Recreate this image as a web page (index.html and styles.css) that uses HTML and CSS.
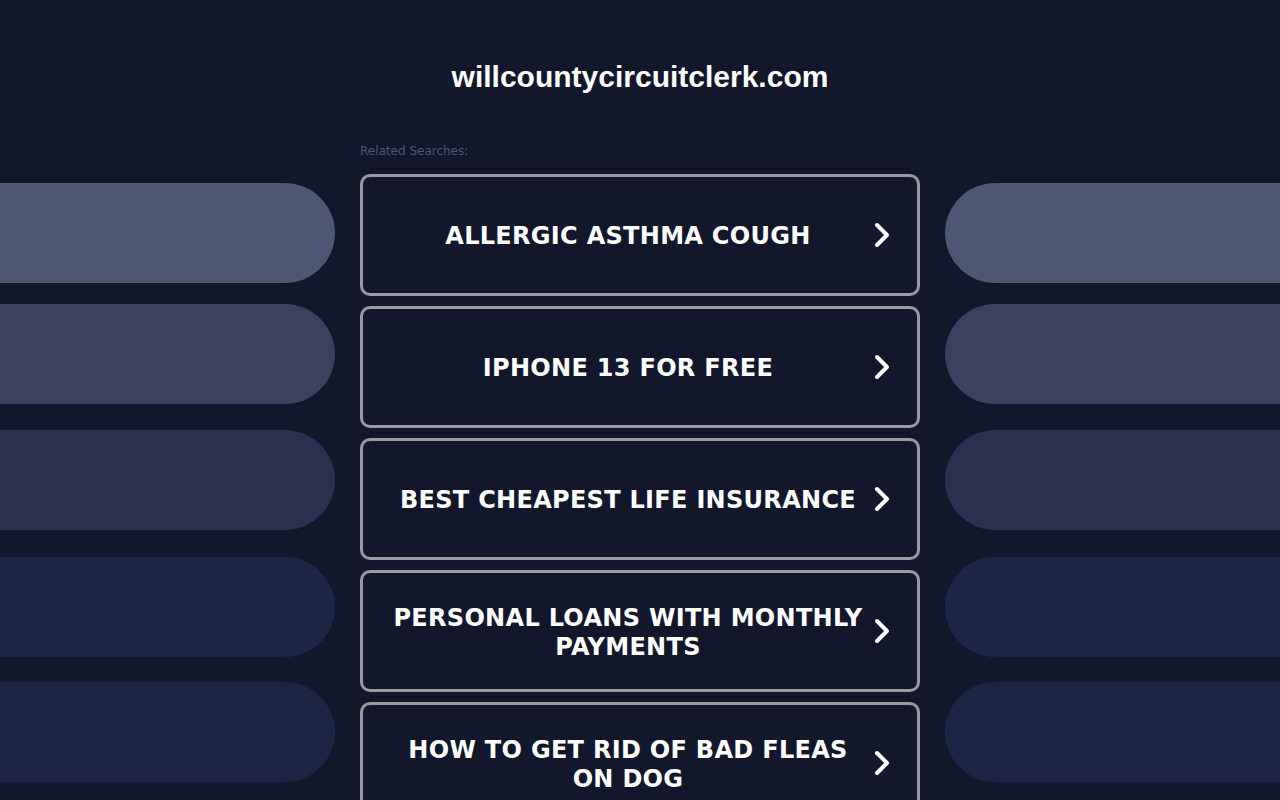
FILE: index.html
```html
<!DOCTYPE html>
<html>
<head>
<meta charset="utf-8">
<link rel="stylesheet" href="styles.css">
</head>
<body>
<div class="page">
  <div class="side side-left">
    <div class="pill p1"></div>
    <div class="pill p2"></div>
    <div class="pill p3"></div>
    <div class="pill p4"></div>
    <div class="pill p5"></div>
  </div>
  <main class="center">
    <h1 class="domain">willcountycircuitclerk.com</h1>
    <div class="related">Related Searches:</div>
    <div class="links">
      <a class="link" href="#"><span class="label">ALLERGIC ASTHMA COUGH</span><svg class="chev" viewBox="0 0 18 28" width="18" height="28"><path d="M4 4 L14 14 L4 24" fill="none" stroke="#fff" stroke-width="4" stroke-linecap="round" stroke-linejoin="round"/></svg></a>
      <a class="link" href="#"><span class="label">IPHONE 13 FOR FREE</span><svg class="chev" viewBox="0 0 18 28" width="18" height="28"><path d="M4 4 L14 14 L4 24" fill="none" stroke="#fff" stroke-width="4" stroke-linecap="round" stroke-linejoin="round"/></svg></a>
      <a class="link" href="#"><span class="label">BEST CHEAPEST LIFE INSURANCE</span><svg class="chev" viewBox="0 0 18 28" width="18" height="28"><path d="M4 4 L14 14 L4 24" fill="none" stroke="#fff" stroke-width="4" stroke-linecap="round" stroke-linejoin="round"/></svg></a>
      <a class="link" href="#"><span class="label">PERSONAL LOANS WITH MONTHLY PAYMENTS</span><svg class="chev" viewBox="0 0 18 28" width="18" height="28"><path d="M4 4 L14 14 L4 24" fill="none" stroke="#fff" stroke-width="4" stroke-linecap="round" stroke-linejoin="round"/></svg></a>
      <a class="link" href="#"><span class="label">HOW TO GET RID OF BAD FLEAS ON DOG</span><svg class="chev" viewBox="0 0 18 28" width="18" height="28"><path d="M4 4 L14 14 L4 24" fill="none" stroke="#fff" stroke-width="4" stroke-linecap="round" stroke-linejoin="round"/></svg></a>
    </div>
  </main>
  <div class="side side-right">
    <div class="pill p1"></div>
    <div class="pill p2"></div>
    <div class="pill p3"></div>
    <div class="pill p4"></div>
    <div class="pill p5"></div>
  </div>
</div>
</body>
</html>
```

FILE: styles.css
```css
html, body {
  margin: 0;
  padding: 0;
  background: #12172b;
  height: 800px;
  overflow: hidden;
}

.page {
  display: grid;
  grid-template-columns: 335px 560px 335px;
  column-gap: 25px;
  width: 1280px;
}

.side {
  display: flex;
  flex-direction: column;
  padding-top: 183px;
}

.pill {
  height: 100px;
  margin-bottom: 22px;
}
.side .p2 { margin-top: -1px; }
.side .p3 { margin-top: 4px; }
.side .p4 { margin-top: 5px; }
.side .p5 { margin-top: 3px; }

.side-left .pill { border-radius: 0 50px 50px 0; }
.side-right .pill { border-radius: 50px 0 0 50px; }

.p1 { background: #4d5672; }
.p2 { background: #3a4260; }
.p3 { background: #2a3151; }
.p4 { background: #1e2648; }
.p5 { background: #1d2546; }

.center {
  display: flex;
  flex-direction: column;
}

.domain {
  margin: 0;
  padding-top: 59px;
  height: 36px;
  line-height: 36px;
  text-align: center;
  font-family: "Liberation Sans", Arial, sans-serif;
  font-weight: bold;
  font-size: 30px;
  color: #ffffff;
}

.related {
  margin-top: 49px;
  font-family: "DejaVu Sans", Verdana, sans-serif;
  font-size: 12px;
  line-height: 14px;
  color: #4e5678;
}

.links {
  display: flex;
  flex-direction: column;
  gap: 10px;
  margin-top: 16px;
}

.link {
  box-sizing: border-box;
  height: 122px;
  display: flex;
  align-items: center;
  border: 3px solid #9b9b9f;
  border-radius: 10px;
  padding: 3px 26px 0 26px;
  text-decoration: none;
  background: #12172b;
}

.label {
  flex: 1;
  text-align: center;
  font-family: "DejaVu Sans", Verdana, sans-serif;
  font-weight: bold;
  font-size: 24px;
  line-height: 29px;
  letter-spacing: 0.3px;
  color: #ffffff;
}

.chev {
  flex: none;
  margin-left: 6px;
  margin-top: -3px;
}
```
